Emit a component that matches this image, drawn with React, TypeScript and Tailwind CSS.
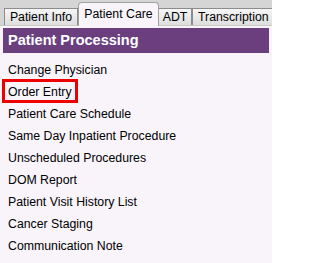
import React from 'react';

const items = [
  'Change Physician',
  'Order Entry',
  'Patient Care Schedule',
  'Same Day Inpatient Procedure',
  'Unscheduled Procedures',
  'DOM Report',
  'Patient Visit History List',
  'Cancer Staging',
  'Communication Note',
];

export default function App() {
  return (
    <div className="w-[272px] h-[263px] overflow-hidden bg-[#f8f4fa] font-['Liberation_Sans',Arial,sans-serif] text-black">
      {/* Tab strip */}
      <div className="flex h-[26px] items-end bg-[#d5d5d5] pl-[4px] border-b border-[#c8c8c8]">
        <div className="flex h-[17px] w-[74px] shrink-0 items-center justify-center border border-b-0 border-[#8c8c8c] bg-gradient-to-b from-[#f6f6f6] to-[#dedede] text-[12.3px] leading-none">
          Patient Info
        </div>
        <div className="-mb-px flex h-[24px] w-[81px] shrink-0 items-start justify-center rounded-t-[4px] border border-b-0 border-[#a0a0a0] bg-[#f8f4fa] pt-[5px] text-[12.3px] leading-none">
          Patient Care
        </div>
        <div className="flex h-[17px] w-[33px] shrink-0 items-center justify-center border border-b-0 border-l-0 border-[#8c8c8c] bg-gradient-to-b from-[#f6f6f6] to-[#dedede] text-[12.3px] leading-none">
          ADT
        </div>
        <div className="flex h-[17px] w-[82px] shrink-0 items-center justify-start border border-b-0 border-[#8c8c8c] bg-gradient-to-b from-[#f6f6f6] to-[#dedede] pl-[5px] text-[12.3px] leading-none whitespace-nowrap">
          Transcription
        </div>
      </div>

      {/* Section header */}
      <div className="mx-[3px] mt-[2px] flex h-[25px] items-center bg-[#6b3f7e] pl-[5px] text-[14.5px] font-bold text-white">
        Patient Processing
      </div>

      {/* Menu */}
      <ul className="pt-[6px]">
        {items.map((item) => (
          <li key={item} className="relative flex h-[22px] items-center pl-[8px] text-[12.3px]">
            {item}
            {item === 'Order Entry' && (
              <span className="absolute left-[2px] top-[-2px] h-[24px] w-[76px] border-[3px] border-[#ee0000]" />
            )}
          </li>
        ))}
      </ul>
    </div>
  );
}
